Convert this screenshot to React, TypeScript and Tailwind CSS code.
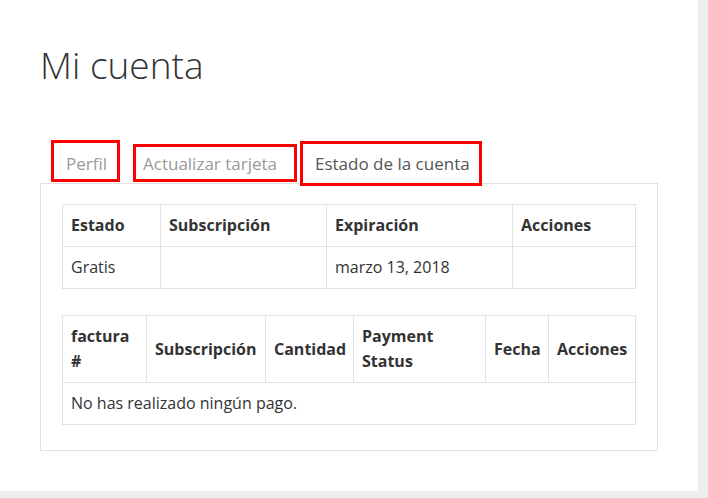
import React from 'react';

const font = { fontFamily: '"Open Sans", "Liberation Sans", sans-serif' };

const estadoCols = [98, 166, 186, 123];
const pagosCols = [84, 119, 88, 132, 63, 87];

function Tabs() {
  return (
    <div className="flex items-start h-[43px] pl-[51px]">
      <div className="box-border h-[42px] w-[69px] border-[3px] border-[#ff0000] pl-[12px] pt-[9px] text-[17px] leading-[24px] text-[#9a9a9a] whitespace-nowrap">
        Perfil
      </div>
      <div className="box-border ml-[13px] mt-[4px] h-[38px] w-[164px] border-[3px] border-[#ff0000] pl-[7px] pt-[5px] text-[17px] leading-[24px] text-[#9a9a9a] whitespace-nowrap">
        Actualizar tarjeta
      </div>
      <div className="relative z-10 box-border ml-[3px] mt-[1px] h-[45px] w-[182px] border-[3px] border-[#ff0000] bg-white pl-[12px] pt-[8px] text-[17px] leading-[24px] text-[#555] whitespace-nowrap">
        Estado de la cuenta
      </div>
    </div>
  );
}

function Cell({ children, head }: { children?: React.ReactNode; head?: boolean }) {
  const cls = 'border border-[#e2e2e2] px-[8px] py-[8px] text-left align-middle leading-[25px] text-[16px]';
  return head ? <th className={`${cls} font-bold text-[#333]`}>{children}</th> : <td className={`${cls} text-[#333]`}>{children}</td>;
}

export default function App() {
  return (
    <div className="flex w-[708px] h-[498px] bg-[#eeeeee] overflow-hidden" style={font}>
      <div className="w-[698px] h-[491px] bg-white">
        <h1 className="ml-[40px] mt-[43px] text-[37px] leading-[44px] font-light text-[#333]">Mi cuenta</h1>
        <div className="mt-[53px]">
          <Tabs />
          <div className="ml-[40px] w-[618px] border border-[#e0e0e0] px-[21px] pt-[20px] pb-[25px]">
            <table className="w-[574px] table-fixed border-collapse">
              <colgroup>
                {estadoCols.map((w, i) => (
                  <col key={i} style={{ width: w }} />
                ))}
              </colgroup>
              <thead>
                <tr>
                  <Cell head>Estado</Cell>
                  <Cell head>Subscripción</Cell>
                  <Cell head>Expiración</Cell>
                  <Cell head>Acciones</Cell>
                </tr>
              </thead>
              <tbody>
                <tr>
                  <Cell>Gratis</Cell>
                  <Cell></Cell>
                  <Cell>marzo 13, 2018</Cell>
                  <Cell></Cell>
                </tr>
              </tbody>
            </table>

            <table className="mt-[26px] w-[574px] table-fixed border-collapse">
              <colgroup>
                {pagosCols.map((w, i) => (
                  <col key={i} style={{ width: w }} />
                ))}
              </colgroup>
              <thead>
                <tr>
                  <Cell head>factura #</Cell>
                  <Cell head>Subscripción</Cell>
                  <Cell head>Cantidad</Cell>
                  <Cell head>Payment Status</Cell>
                  <Cell head>Fecha</Cell>
                  <Cell head>Acciones</Cell>
                </tr>
              </thead>
              <tbody>
                <tr>
                  <td colSpan={6} className="border border-[#e2e2e2] px-[8px] py-[8px] leading-[25px] text-[16px] text-[#333]">
                    No has realizado ningún pago.
                  </td>
                </tr>
              </tbody>
            </table>
          </div>
        </div>
      </div>
    </div>
  );
}
